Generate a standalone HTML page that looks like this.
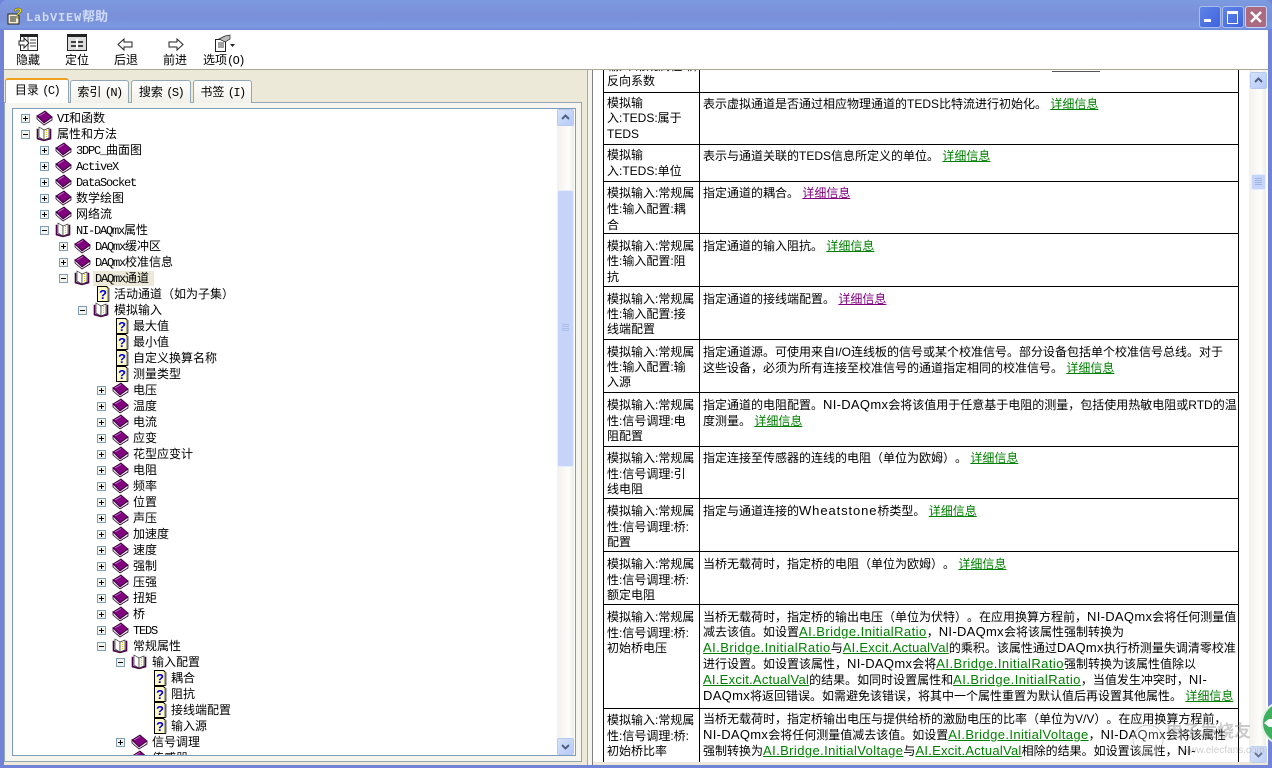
<!DOCTYPE html>
<html><head><meta charset="utf-8"><style>
html,body{margin:0;padding:0;background:#fff;overflow:hidden}
#w{position:relative;width:1272px;height:768px;overflow:hidden;background:#7083d6;font:12px/16px "Liberation Sans","WenQuanYi Zen Hei","Noto Sans CJK SC",sans-serif;color:#000;text-spacing-trim:space-all;font-feature-settings:"chws" 0,"halt" 0,"palt" 0}
#w div,#w svg{position:absolute}
.t,.l,.c{white-space:nowrap;height:16px}
.c{margin-top:1px}
.m{font:12px/16px "Liberation Mono",monospace;letter-spacing:-1.2px}
.n{font-size:13px;letter-spacing:.3px}
.e{font-size:13px;letter-spacing:.45px}
.f{font-size:13px;letter-spacing:.25px}
.g{font-size:13px;letter-spacing:.4px}
.k{font-size:13px;letter-spacing:.9px}
.i{width:17px;height:16px}
.x{width:9px;height:9px}
a{color:#008000;text-decoration:underline}
a.v{color:#800080}
.h{background:#000;height:1px;left:603px;width:636px}
.bt{width:15px;height:15px;background:linear-gradient(135deg,#d6e2fb,#b5c9f7);border:1px solid #fff;outline:1px solid #b8c9ee;outline-offset:-1px;border-radius:2px}
.tab{background:linear-gradient(#fff,#f1f0e8);border:1px solid #91a7b4;border-bottom:0;border-radius:3px 3px 0 0;height:22px;top:80px;line-height:22px;text-align:center}
.tab .m,.tb .m{letter-spacing:-1.6px}
</style></head><body><div id="w">
<svg width="0" height="0" style="position:absolute"><defs>
<symbol id="p" viewBox="0 0 9 9"><rect x=".5" y=".5" width="8" height="8" fill="#f3f3ee" stroke="#7f9db9"/><path d="M2 4.500h5M4.500 2v5" stroke="#000"/></symbol>
<symbol id="n" viewBox="0 0 9 9"><rect x=".5" y=".5" width="8" height="8" fill="#f3f3ee" stroke="#7f9db9"/><path d="M2 4.500h5" stroke="#000"/></symbol>
<symbol id="b" viewBox="0 0 17 16"><path d="M1 6L9 1l7 6-8 6z" fill="#800080" stroke="#300030" stroke-width=".8"/><path d="M1 6v3l7 6 8-5V7l-8 6z" fill="#e8e8e8" stroke="#300030" stroke-width=".8"/><path d="M3 6l6-3.500" stroke="#c070c0"/></symbol>
<symbol id="o" viewBox="0 0 17 16"><path d="M1 3v10l7 2 7-2V3l-1 0v9l-6 2-6-2V3z" fill="#800080" stroke="#300030" stroke-width=".6"/><path d="M3 1l5 3v10l-5-3z" fill="#fff" stroke="#333" stroke-width=".7"/><path d="M8 4l5-2v10l-5 2z" fill="#fffef0" stroke="#333" stroke-width=".7"/><path d="M10.500 4v7" stroke="#e0c800" stroke-dasharray="1 1"/></symbol>
<symbol id="q" viewBox="0 0 17 16"><path d="M2.500 .5h9l2 2v13h-11z" fill="#fffcc8" stroke="#000"/><path d="M13.500 2v13.500" stroke="#666" stroke-width="2"/><text x="8" y="13" font-family="Liberation Sans" font-weight="700" font-size="13" fill="#0000e0" text-anchor="middle">?</text></symbol>
</defs></svg>

<!-- title bar -->
<div style="left:0;top:0;width:1272px;height:30px;background:linear-gradient(#7b9adf,#7c95dc 25%,#7a8fd9 60%,#7b9ae0 90%,#6f86d8);border-radius:7px 7px 0 0"></div>
<svg style="left:6px;top:7px" width="19" height="18" viewBox="0 0 19 18"><path d="M2 7h9l2 2v8H2z" fill="#f4f0d0" stroke="#222"/><path d="M4 10h6M4 12h6M4 14h6" stroke="#222"/><text x="12" y="11" font-family="Liberation Sans" font-weight="700" font-size="15" fill="#f0e000" stroke="#333" stroke-width=".4" text-anchor="middle">?</text></svg>
<div class="t" style="left:26px;top:9px;color:#cfdcf6;font-weight:700;font-size:13px"><span style="font:700 12px/16px 'Liberation Mono',monospace;letter-spacing:.8px">LabVIEW</span>帮助</div>
<div style="left:1199px;top:6px;width:20px;height:20px;border:1px solid #a9bdef;border-radius:3px;background:linear-gradient(135deg,#5f84e8,#3f63dc)"><div style="left:4px;top:12px;width:7px;height:3px;background:#fff"></div></div>
<div style="left:1222px;top:6px;width:20px;height:20px;border:1px solid #a9bdef;border-radius:3px;background:linear-gradient(135deg,#5f84e8,#3f63dc)"><div style="left:4px;top:4px;width:9px;height:9px;border:1px solid #fff;border-top-width:3px"></div></div>
<div style="left:1245px;top:6px;width:20px;height:20px;border:1px solid #c9d2ef;border-radius:3px;background:#ab6a80"><svg style="left:3px;top:3px" width="14" height="14"><path d="M2 2l10 10M12 2L2 12" stroke="#fff" stroke-width="2.400"/></svg></div>

<!-- client -->
<div style="left:4px;top:30px;width:1264px;height:735px;background:#ece9d8"></div>
<div style="left:4px;top:30px;width:1264px;height:39px;background:#fff"></div>
<div style="left:4px;top:69px;width:1264px;height:1px;background:#aca899"></div>

<!-- toolbar -->
<svg style="left:18px;top:34px" width="22" height="18" viewBox="0 0 22 18"><rect x="2.500" y=".5" width="17" height="16" fill="#fff" stroke="#222"/><path d="M2 1h18v2H2z" fill="#222"/><path d="M12 6h6M12 9h6M12 12h6M10 3v14" stroke="#444"/><path d="M1 7h5V4l5 5-5 5v-3H1z" fill="#fff" stroke="#222"/></svg>
<svg style="left:67px;top:34px" width="21" height="18" viewBox="0 0 21 18"><rect x=".5" y=".5" width="19" height="16" fill="#ddd" stroke="#222"/><path d="M1 1h18v2H1z" fill="#222"/><path d="M4 8h5M11 8h5M4 12h5M11 12h5" stroke="#444" stroke-width="2"/><path d="M10 5v10" stroke="#fff" stroke-width="2"/></svg>
<svg style="left:117px;top:38px" width="17" height="13" viewBox="0 0 17 13"><path d="M1 6.500L7 1v3h8v5H7v3z" fill="#fff" stroke="#222"/></svg>
<svg style="left:167px;top:38px" width="17" height="13" viewBox="0 0 17 13"><path d="M16 6.500L10 1v3H2v5h8v3z" fill="#fff" stroke="#222"/></svg>
<svg style="left:213px;top:34px" width="22" height="18" viewBox="0 0 22 18"><path d="M2.500 5.500h10v12h-10z" fill="#fff" stroke="#222"/><path d="M5 9h6M5 11h6M5 13h6" stroke="#444"/><path d="M6 5l6-3 5 -1v4l-5 3z" fill="#bbb" stroke="#222" stroke-width=".7"/><path d="M17 10h5l-2.500 3z" fill="#222"/></svg>
<div class="t" style="left:16px;top:52px">隐藏</div>
<div class="t" style="left:65px;top:52px">定位</div>
<div class="t" style="left:114px;top:52px">后退</div>
<div class="t" style="left:163px;top:52px">前进</div>
<div class="t tb" style="left:203px;top:52px">选项<span class="m">(O)</span></div>

<!-- tabs & tree frame -->
<div style="left:4px;top:102px;width:576px;height:658px;background:#f6f5ef;border:1px solid #91a7b4"></div>
<div class="tab" style="left:70px;width:57px">索引 <span class="m">(N)</span></div>
<div class="tab" style="left:131px;width:58px">搜索 <span class="m">(S)</span></div>
<div class="tab" style="left:193px;width:57px">书签 <span class="m">(I)</span></div>
<div class="tb" style="left:5px;top:78px;width:64px;height:25px;background:#fff;border:1px solid #91a7b4;border-bottom:0;border-top:2px solid #f0a020;border-radius:3px 3px 0 0;box-sizing:border-box;text-align:center;line-height:20px">目录 <span class="m">(C)</span></div>

<div id="tree" style="left:12px;top:108px;width:562px;height:646px;background:#fff;border:1px solid #7f9db9;overflow:hidden">
<div style="left:-13px;top:-108px;width:600px;height:760px;overflow:hidden">
<svg class="x" style="left:21px;top:113px"><use href="#p"/></svg><svg class="i" style="left:36px;top:109px"><use href="#b"/></svg><div class="t" style="left:57px;top:109px"><span class="m">VI</span>和函数</div>
<svg class="x" style="left:21px;top:129px"><use href="#n"/></svg><svg class="i" style="left:36px;top:125px"><use href="#o"/></svg><div class="t" style="left:57px;top:125px">属性和方法</div>
<svg class="x" style="left:40px;top:145px"><use href="#p"/></svg><svg class="i" style="left:55px;top:141px"><use href="#b"/></svg><div class="t" style="left:76px;top:141px"><span class="m">3DPC_</span>曲面图</div>
<svg class="x" style="left:40px;top:161px"><use href="#p"/></svg><svg class="i" style="left:55px;top:157px"><use href="#b"/></svg><div class="t" style="left:76px;top:157px"><span class="m">ActiveX</span></div>
<svg class="x" style="left:40px;top:177px"><use href="#p"/></svg><svg class="i" style="left:55px;top:173px"><use href="#b"/></svg><div class="t" style="left:76px;top:173px"><span class="m">DataSocket</span></div>
<svg class="x" style="left:40px;top:193px"><use href="#p"/></svg><svg class="i" style="left:55px;top:189px"><use href="#b"/></svg><div class="t" style="left:76px;top:189px">数学绘图</div>
<svg class="x" style="left:40px;top:209px"><use href="#p"/></svg><svg class="i" style="left:55px;top:205px"><use href="#b"/></svg><div class="t" style="left:76px;top:205px">网络流</div>
<svg class="x" style="left:40px;top:225px"><use href="#n"/></svg><svg class="i" style="left:55px;top:221px"><use href="#o"/></svg><div class="t" style="left:76px;top:221px"><span class="m">NI-DAQmx</span>属性</div>
<svg class="x" style="left:59px;top:241px"><use href="#p"/></svg><svg class="i" style="left:74px;top:237px"><use href="#b"/></svg><div class="t" style="left:95px;top:237px"><span class="m">DAQmx</span>缓冲区</div>
<svg class="x" style="left:59px;top:257px"><use href="#p"/></svg><svg class="i" style="left:74px;top:253px"><use href="#b"/></svg><div class="t" style="left:95px;top:253px"><span class="m">DAQmx</span>校准信息</div>
<svg class="x" style="left:59px;top:273px"><use href="#n"/></svg><svg class="i" style="left:74px;top:269px"><use href="#o"/></svg><div class="t" style="left:93px;top:270px;width:61px;height:15px;background:#ece9d8"></div><div class="t" style="left:95px;top:269px"><span class="m">DAQmx</span>通道</div>
<svg class="i" style="left:95px;top:285px"><use href="#q"/></svg><div class="t" style="left:114px;top:285px">活动通道（如为子集）</div>
<svg class="x" style="left:78px;top:305px"><use href="#n"/></svg><svg class="i" style="left:93px;top:301px"><use href="#o"/></svg><div class="t" style="left:114px;top:301px">模拟输入</div>
<svg class="i" style="left:114px;top:317px"><use href="#q"/></svg><div class="t" style="left:133px;top:317px">最大值</div>
<svg class="i" style="left:114px;top:333px"><use href="#q"/></svg><div class="t" style="left:133px;top:333px">最小值</div>
<svg class="i" style="left:114px;top:349px"><use href="#q"/></svg><div class="t" style="left:133px;top:349px">自定义换算名称</div>
<svg class="i" style="left:114px;top:365px"><use href="#q"/></svg><div class="t" style="left:133px;top:365px">测量类型</div>
<svg class="x" style="left:97px;top:385px"><use href="#p"/></svg><svg class="i" style="left:112px;top:381px"><use href="#b"/></svg><div class="t" style="left:133px;top:381px">电压</div>
<svg class="x" style="left:97px;top:401px"><use href="#p"/></svg><svg class="i" style="left:112px;top:397px"><use href="#b"/></svg><div class="t" style="left:133px;top:397px">温度</div>
<svg class="x" style="left:97px;top:417px"><use href="#p"/></svg><svg class="i" style="left:112px;top:413px"><use href="#b"/></svg><div class="t" style="left:133px;top:413px">电流</div>
<svg class="x" style="left:97px;top:433px"><use href="#p"/></svg><svg class="i" style="left:112px;top:429px"><use href="#b"/></svg><div class="t" style="left:133px;top:429px">应变</div>
<svg class="x" style="left:97px;top:449px"><use href="#p"/></svg><svg class="i" style="left:112px;top:445px"><use href="#b"/></svg><div class="t" style="left:133px;top:445px">花型应变计</div>
<svg class="x" style="left:97px;top:465px"><use href="#p"/></svg><svg class="i" style="left:112px;top:461px"><use href="#b"/></svg><div class="t" style="left:133px;top:461px">电阻</div>
<svg class="x" style="left:97px;top:481px"><use href="#p"/></svg><svg class="i" style="left:112px;top:477px"><use href="#b"/></svg><div class="t" style="left:133px;top:477px">频率</div>
<svg class="x" style="left:97px;top:497px"><use href="#p"/></svg><svg class="i" style="left:112px;top:493px"><use href="#b"/></svg><div class="t" style="left:133px;top:493px">位置</div>
<svg class="x" style="left:97px;top:513px"><use href="#p"/></svg><svg class="i" style="left:112px;top:509px"><use href="#b"/></svg><div class="t" style="left:133px;top:509px">声压</div>
<svg class="x" style="left:97px;top:529px"><use href="#p"/></svg><svg class="i" style="left:112px;top:525px"><use href="#b"/></svg><div class="t" style="left:133px;top:525px">加速度</div>
<svg class="x" style="left:97px;top:545px"><use href="#p"/></svg><svg class="i" style="left:112px;top:541px"><use href="#b"/></svg><div class="t" style="left:133px;top:541px">速度</div>
<svg class="x" style="left:97px;top:561px"><use href="#p"/></svg><svg class="i" style="left:112px;top:557px"><use href="#b"/></svg><div class="t" style="left:133px;top:557px">强制</div>
<svg class="x" style="left:97px;top:577px"><use href="#p"/></svg><svg class="i" style="left:112px;top:573px"><use href="#b"/></svg><div class="t" style="left:133px;top:573px">压强</div>
<svg class="x" style="left:97px;top:593px"><use href="#p"/></svg><svg class="i" style="left:112px;top:589px"><use href="#b"/></svg><div class="t" style="left:133px;top:589px">扭矩</div>
<svg class="x" style="left:97px;top:609px"><use href="#p"/></svg><svg class="i" style="left:112px;top:605px"><use href="#b"/></svg><div class="t" style="left:133px;top:605px">桥</div>
<svg class="x" style="left:97px;top:625px"><use href="#p"/></svg><svg class="i" style="left:112px;top:621px"><use href="#b"/></svg><div class="t" style="left:133px;top:621px"><span class="m">TEDS</span></div>
<svg class="x" style="left:97px;top:641px"><use href="#n"/></svg><svg class="i" style="left:112px;top:637px"><use href="#o"/></svg><div class="t" style="left:133px;top:637px">常规属性</div>
<svg class="x" style="left:116px;top:657px"><use href="#n"/></svg><svg class="i" style="left:131px;top:653px"><use href="#o"/></svg><div class="t" style="left:152px;top:653px">输入配置</div>
<svg class="i" style="left:152px;top:669px"><use href="#q"/></svg><div class="t" style="left:171px;top:669px">耦合</div>
<svg class="i" style="left:152px;top:685px"><use href="#q"/></svg><div class="t" style="left:171px;top:685px">阻抗</div>
<svg class="i" style="left:152px;top:701px"><use href="#q"/></svg><div class="t" style="left:171px;top:701px">接线端配置</div>
<svg class="i" style="left:152px;top:717px"><use href="#q"/></svg><div class="t" style="left:171px;top:717px">输入源</div>
<svg class="x" style="left:116px;top:737px"><use href="#p"/></svg><svg class="i" style="left:131px;top:733px"><use href="#b"/></svg><div class="t" style="left:152px;top:733px">信号调理</div>
<svg class="i" style="left:131px;top:749px"><use href="#b"/></svg><div class="t" style="left:152px;top:749px;height:11px;overflow:hidden">传感器</div>
</div>
<!-- tree scrollbar -->
<div style="left:544px;top:0;width:17px;height:646px;background:linear-gradient(90deg,#f3f1ec,#fdfdfb 70%,#eeede5)"></div>
<div class="bt" style="left:544px;top:0"><svg style="left:3px;top:4px" width="9" height="7"><path d="M1 5l3.500-3.500L8 5" fill="none" stroke="#4d6185" stroke-width="2"/></svg></div>
<div style="left:544px;top:81px;width:15px;height:275px;background:#c6d4f9;border:1px solid #e6edfd;border-radius:2px"><svg style="left:4px;top:133px" width="7" height="8"><path d="M0 .5h7M0 2.500h7M0 4.500h7M0 6.500h7" stroke="#a9bbe8"/></svg></div>
<div class="bt" style="left:544px;top:629px"><svg style="left:3px;top:4px" width="9" height="7"><path d="M1 2l3.500 3.500L8 2" fill="none" stroke="#4d6185" stroke-width="2"/></svg></div>
</div>

<!-- splitter -->
<div style="left:588px;top:70px;width:4px;height:695px;background:#f4f3ec"></div>
<div style="left:587px;top:70px;width:1px;height:695px;background:#aca899"></div>
<div style="left:592px;top:70px;width:1px;height:695px;background:#808080"></div>

<!-- content -->
<div style="left:593px;top:70px;width:675px;height:692px;background:#fff"></div>
<div style="left:603px;top:70px;width:1px;height:692px;background:#000"></div>
<div style="left:699px;top:70px;width:1px;height:692px;background:#000"></div>
<div style="left:1238px;top:70px;width:1px;height:692px;background:#000"></div>
<div class="h" style="top:92px"></div><div class="h" style="top:144px"></div><div class="h" style="top:181px"></div><div class="h" style="top:233px"></div><div class="h" style="top:286px"></div><div class="h" style="top:339px"></div><div class="h" style="top:392px"></div><div class="h" style="top:446px"></div><div class="h" style="top:498px"></div><div class="h" style="top:551px"></div><div class="h" style="top:604px"></div><div class="h" style="top:708px"></div>

<div style="left:593px;top:70px;width:650px;height:3px;overflow:hidden"><div class="l" style="left:14px;top:-12px">输入:常规属性:桥:</div><div style="left:459px;top:1px;width:48px;height:1px;background:#555"></div></div>
<div class="c" style="left:607px;top:72px">反向系数</div>

<div class="c" style="left:607px;top:94px">模拟输</div><div class="c" style="left:607px;top:109px">入:TEDS:属于</div><div class="c" style="left:607px;top:125px">TEDS</div>
<div class="l" style="left:703px;top:96px">表示虚拟通道是否通过相应物理通道的TEDS比特流进行初始化。 <a href="#">详细信息</a></div>

<div class="c" style="left:607px;top:146px">模拟输</div><div class="c" style="left:607px;top:162px">入:TEDS:单位</div>
<div class="l" style="left:703px;top:148px">表示与通道关联的TEDS信息所定义的单位。 <a href="#">详细信息</a></div>

<div class="c" style="left:607px;top:184px">模拟输入:常规属</div><div class="c" style="left:607px;top:200px">性:输入配置:耦</div><div class="c" style="left:607px;top:216px">合</div>
<div class="l" style="left:703px;top:185px">指定通道的耦合。 <a class="v" href="#">详细信息</a></div>

<div class="c" style="left:607px;top:237px">模拟输入:常规属</div><div class="c" style="left:607px;top:252px">性:输入配置:阻</div><div class="c" style="left:607px;top:268px">抗</div>
<div class="l" style="left:703px;top:238px">指定通道的输入阻抗。 <a href="#">详细信息</a></div>

<div class="c" style="left:607px;top:290px">模拟输入:常规属</div><div class="c" style="left:607px;top:305px">性:输入配置:接</div><div class="c" style="left:607px;top:320px">线端配置</div>
<div class="l" style="left:703px;top:291px">指定通道的接线端配置。 <a class="v" href="#">详细信息</a></div>

<div class="c" style="left:607px;top:343px">模拟输入:常规属</div><div class="c" style="left:607px;top:358px">性:输入配置:输</div><div class="c" style="left:607px;top:373px">入源</div>
<div class="l" style="left:703px;top:344px">指定通道源。可使用来自I/O连线板的信号或某个校准信号。部分设备包括单个校准信号总线。对于</div>
<div class="l" style="left:703px;top:360px">这些设备，必须为所有连接至校准信号的通道指定相同的校准信号。 <a href="#">详细信息</a></div>

<div class="c" style="left:607px;top:396px">模拟输入:常规属</div><div class="c" style="left:607px;top:412px">性:信号调理:电</div><div class="c" style="left:607px;top:427px">阻配置</div>
<div class="l" style="left:703px;top:397px">指定通道的电阻配置。<span class="n">NI-DAQmx</span>会将该值用于任意基于电阻的测量，包括使用热敏电阻或RTD的温</div>
<div class="l" style="left:703px;top:413px">度测量。 <a href="#">详细信息</a></div>

<div class="c" style="left:607px;top:449px">模拟输入:常规属</div><div class="c" style="left:607px;top:465px">性:信号调理:引</div><div class="c" style="left:607px;top:480px">线电阻</div>
<div class="l" style="left:703px;top:450px">指定连接至传感器的连线的电阻（单位为欧姆）。 <a href="#">详细信息</a></div>

<div class="c" style="left:607px;top:502px">模拟输入:常规属</div><div class="c" style="left:607px;top:518px">性:信号调理:桥:</div><div class="c" style="left:607px;top:533px">配置</div>
<div class="l" style="left:703px;top:503px">指定与通道连接的<span class="k">Wheatstone</span>桥类型。 <a href="#">详细信息</a></div>

<div class="c" style="left:607px;top:555px">模拟输入:常规属</div><div class="c" style="left:607px;top:571px">性:信号调理:桥:</div><div class="c" style="left:607px;top:586px">额定电阻</div>
<div class="l" style="left:703px;top:556px">当桥无载荷时，指定桥的电阻（单位为欧姆）。 <a href="#">详细信息</a></div>

<div class="c" style="left:607px;top:608px">模拟输入:常规属</div><div class="c" style="left:607px;top:624px">性:信号调理:桥:</div><div class="c" style="left:607px;top:639px">初始桥电压</div>
<div class="l" style="left:703px;top:609px">当桥无载荷时，指定桥的输出电压（单位为伏特）。在应用换算方程前，<span class="n">NI-DAQmx</span>会将任何测量值</div>
<div class="l" style="left:703px;top:624px">减去该值。如设置<a class="e" href="#">AI.Bridge.InitialRatio</a>，<span class="n">NI-DAQmx</span>会将该属性强制转换为</div>
<div class="l" style="left:703px;top:640px"><a class="e" href="#">AI.Bridge.InitialRatio</a>与<a class="f" href="#">AI.Excit.ActualVal</a>的乘积。该属性通过<span class="n">DAQmx</span>执行桥测量失调清零校准</div>
<div class="l" style="left:703px;top:656px">进行设置。如设置该属性，<span class="n">NI-DAQmx</span>会将<a class="e" href="#">AI.Bridge.InitialRatio</a>强制转换为该属性值除以</div>
<div class="l" style="left:703px;top:672px"><a class="f" href="#">AI.Excit.ActualVal</a>的结果。如同时设置属性和<a class="e" href="#">AI.Bridge.InitialRatio</a>，当值发生冲突时，<span class="n">NI-</span></div>
<div class="l" style="left:703px;top:688px"><span class="n">DAQmx</span>将返回错误。如需避免该错误，将其中一个属性重置为默认值后再设置其他属性。 <a href="#">详细信息</a></div>

<div class="c" style="left:607px;top:711px">模拟输入:常规属</div><div class="c" style="left:607px;top:727px">性:信号调理:桥:</div><div class="c" style="left:607px;top:742px">初始桥比率</div>
<div class="l" style="left:703px;top:711px">当桥无载荷时，指定桥输出电压与提供给桥的激励电压的比率（单位为V/V）。在应用换算方程前，</div>
<div class="l" style="left:703px;top:727px"><span class="n">NI-DAQmx</span>会将任何测量值减去该值。如设置<a class="g" href="#">AI.Bridge.InitialVoltage</a>，<span class="n">NI-DAQmx</span>会将该属性</div>
<div class="l" style="left:703px;top:743px">强制转换为<a class="g" href="#">AI.Bridge.InitialVoltage</a>与<a class="f" href="#">AI.Excit.ActualVal</a>相除的结果。如设置该属性，<span class="n">NI-</span></div>

<!-- right scrollbar -->
<div style="left:1249px;top:70px;width:17px;height:692px;background:linear-gradient(90deg,#f3f1ec,#fdfdfb 70%,#eeede5)"></div>
<div class="bt" style="left:1250px;top:72px"><svg style="left:3px;top:4px" width="9" height="7"><path d="M1 5l3.500-3.500L8 5" fill="none" stroke="#4d6185" stroke-width="2"/></svg></div>
<div style="left:1251px;top:174px;width:13px;height:14px;background:#c6d4f9;border:1px solid #e6edfd;border-radius:2px"><svg style="left:3px;top:3px" width="7" height="8"><path d="M0 .5h7M0 2.500h7M0 4.500h7M0 6.500h7" stroke="#a0b4e6"/></svg></div>
<div class="bt" style="left:1250px;top:746px;opacity:.85"><svg style="left:3px;top:4px" width="9" height="7"><path d="M1 2l3.500 3.500L8 2" fill="none" stroke="#4d6185" stroke-width="2"/></svg></div>

<!-- watermark -->
<div class="t" style="left:1166px;top:722px;font-size:17px;line-height:20px;height:20px;color:rgba(140,140,140,.45);font-weight:700">电子发烧友</div>
<div class="t" style="left:1182px;top:743px;font-size:10px;color:rgba(160,160,160,.5)">www.elecfans.com</div>
<svg style="left:1130px;top:720px" width="36" height="40"><circle cx="18" cy="20" r="15" fill="rgba(255,255,255,.25)" stroke="rgba(130,130,130,.4)"/></svg>
<svg style="left:1260px;top:700px" width="12" height="46"><circle cx="23" cy="23" r="21" fill="#3fb060" stroke="#e4f2e6" stroke-width="2"/><path d="M4 23l5-4h3v8H9z" fill="#fff"/></svg>
</div></body></html>
